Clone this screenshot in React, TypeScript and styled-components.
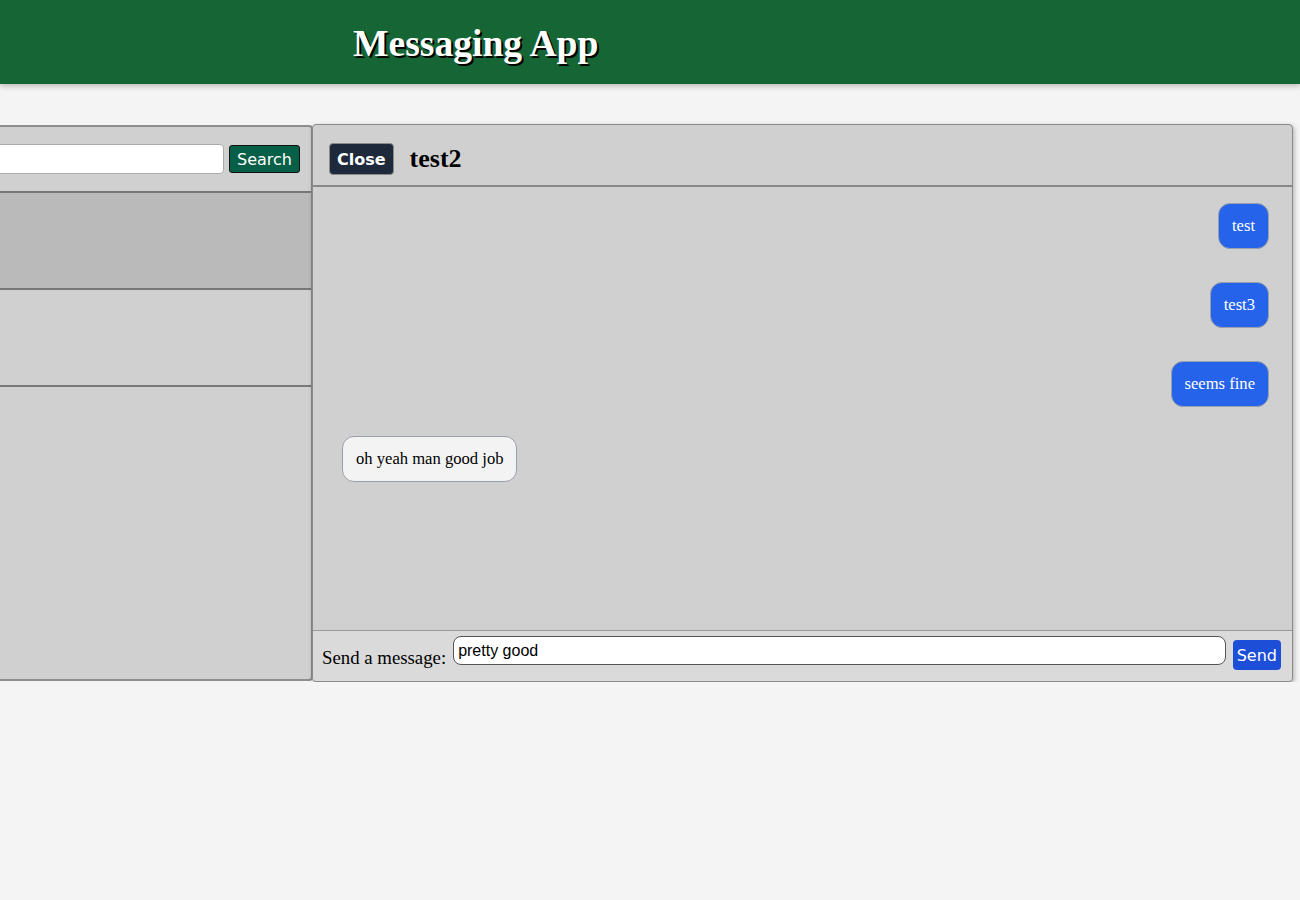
import React from "react";
import styled, { createGlobalStyle } from "styled-components";

const GlobalStyle = createGlobalStyle`
  html, body {
    margin: 0;
    padding: 0;
    background: #f4f4f4;
    font-family: "Liberation Serif", "DejaVu Serif", serif;
    overflow: hidden;
  }
`;

const Header = styled.header`
  height: 84px;
  background: #166534;
  box-shadow: 0 2px 6px rgba(0, 0, 0, 0.25);
  display: flex;
  align-items: center;
  padding-left: 353px;
  box-sizing: border-box;
`;

const Title = styled.h1`
  margin: 0;
  color: #fff;
  font-size: 37.6px;
  font-weight: 700;
  text-shadow: 2px 2px 0 #000;
  padding-top: 2px;
`;

const Main = styled.main`
  display: flex;
  justify-content: flex-end;
  align-items: center;
  padding: 40px 7px 0 0;
`;

const Sidebar = styled.aside`
  flex-shrink: 0;
  width: 440px;
  height: 556px;
  box-sizing: border-box;
  background: #d0d0d0;
  border: 2px solid #8d8d8d;
  border-radius: 4px;
  display: flex;
  flex-direction: column;
  overflow: hidden;
`;

const SearchRow = styled.form`
  height: 64px;
  display: flex;
  align-items: center;
  gap: 5px;
  padding: 0 11px 0 20px;
  border-bottom: 2px solid #777;
`;

const SearchInput = styled.input`
  flex: 1;
  height: 30px;
  box-sizing: border-box;
  border: 1px solid #aaa;
  border-radius: 4px;
  background: #fff;
`;

const SearchButton = styled.button`
  height: 28px;
  padding: 0 7px;
  background: #065f46;
  color: #fff;
  border: 1px solid #111;
  border-radius: 3px;
  font-family: "DejaVu Sans", Verdana, sans-serif;
  font-size: 16px;
`;

const Contact = styled.div<{ $active?: boolean }>`
  height: 95px;
  background: ${(p) => (p.$active ? "#bababa" : "#d0d0d0")};
  border-bottom: 2px solid #777;
`;

const Chat = styled.section`
  flex-shrink: 0;
  width: 981px;
  height: 558px;
  box-sizing: border-box;
  background: #d0d0d0;
  border: 1px solid #8a8a8a;
  border-radius: 4px;
  box-shadow: 1px 2px 5px rgba(0, 0, 0, 0.3);
  display: flex;
  flex-direction: column;
  margin-left: -1px;
`;

const ChatHeader = styled.div`
  height: 62px;
  box-sizing: border-box;
  display: flex;
  align-items: center;
  gap: 16px;
  padding: 8px 16px 0;
  border-bottom: 2px solid #888;
`;

const CloseButton = styled.button`
  height: 32px;
  padding: 0 7px;
  background: #1e293b;
  color: #fff;
  border: 1px solid #8a8a8a;
  border-radius: 4px;
  font-family: "DejaVu Sans", Verdana, sans-serif;
  font-weight: 700;
  font-size: 16px;
`;

const ChatName = styled.h2`
  margin: 0;
  font-size: 26px;
  font-weight: 700;
`;

const Messages = styled.div`
  flex: 1;
  display: flex;
  flex-direction: column;
  gap: 33px;
  padding: 16px 23px 0 29px;
`;

const Bubble = styled.div<{ $mine?: boolean }>`
  align-self: ${(p) => (p.$mine ? "flex-end" : "flex-start")};
  margin-top: ${(p) => (p.$mine ? "0" : "-4px")};
  height: 46px;
  box-sizing: border-box;
  display: flex;
  align-items: center;
  padding: 0 13px;
  border: 1px solid #9aa0aa;
  border-radius: 12px;
  background: ${(p) => (p.$mine ? "#2563eb" : "#f3f3f3")};
  color: ${(p) => (p.$mine ? "#fff" : "#000")};
  font-size: 16.6px;
`;

const Composer = styled.form`
  height: 50px;
  display: flex;
  align-items: center;
  gap: 7px;
  padding: 0 11px 0 9px;
  background: #dadada;
  border-top: 1px solid #999;
  border-radius: 0 0 4px 4px;
`;

const ComposerLabel = styled.label`
  font-size: 18.8px;
  padding-top: 3px;
`;

const ComposerInput = styled.input`
  flex: 1;
  height: 29px;
  box-sizing: border-box;
  margin-top: -11px;
  border: 1px solid #555;
  border-radius: 8px;
  background: #fff;
  padding: 0 4px;
  font-family: "Liberation Sans", Arial, sans-serif;
  font-size: 16px;
  color: #000;
`;

const SendButton = styled.button`
  height: 30px;
  padding: 0 4px;
  margin-top: -2px;
  background: #1d4ed8;
  color: #fff;
  border: none;
  border-radius: 4px;
  font-family: "DejaVu Sans", Verdana, sans-serif;
  font-size: 16px;
`;

const messages = [
  { text: "test", mine: true },
  { text: "test3", mine: true },
  { text: "seems fine", mine: true },
  { text: "oh yeah man good job", mine: false },
];

const App = () => {
  return (
    <>
      <GlobalStyle />
      <Header>
        <Title>Messaging App</Title>
      </Header>
      <Main>
        <Sidebar>
          <SearchRow onSubmit={(e) => e.preventDefault()}>
            <SearchInput type="text" />
            <SearchButton>Search</SearchButton>
          </SearchRow>
          <Contact $active />
          <Contact />
        </Sidebar>
        <Chat>
          <ChatHeader>
            <CloseButton>Close</CloseButton>
            <ChatName>test2</ChatName>
          </ChatHeader>
          <Messages>
            {messages.map((m, i) => (
              <Bubble key={i} $mine={m.mine}>
                {m.text}
              </Bubble>
            ))}
          </Messages>
          <Composer onSubmit={(e) => e.preventDefault()}>
            <ComposerLabel>Send a message:</ComposerLabel>
            <ComposerInput type="text" defaultValue="pretty good" />
            <SendButton>Send</SendButton>
          </Composer>
        </Chat>
      </Main>
    </>
  );
};

export default App;
